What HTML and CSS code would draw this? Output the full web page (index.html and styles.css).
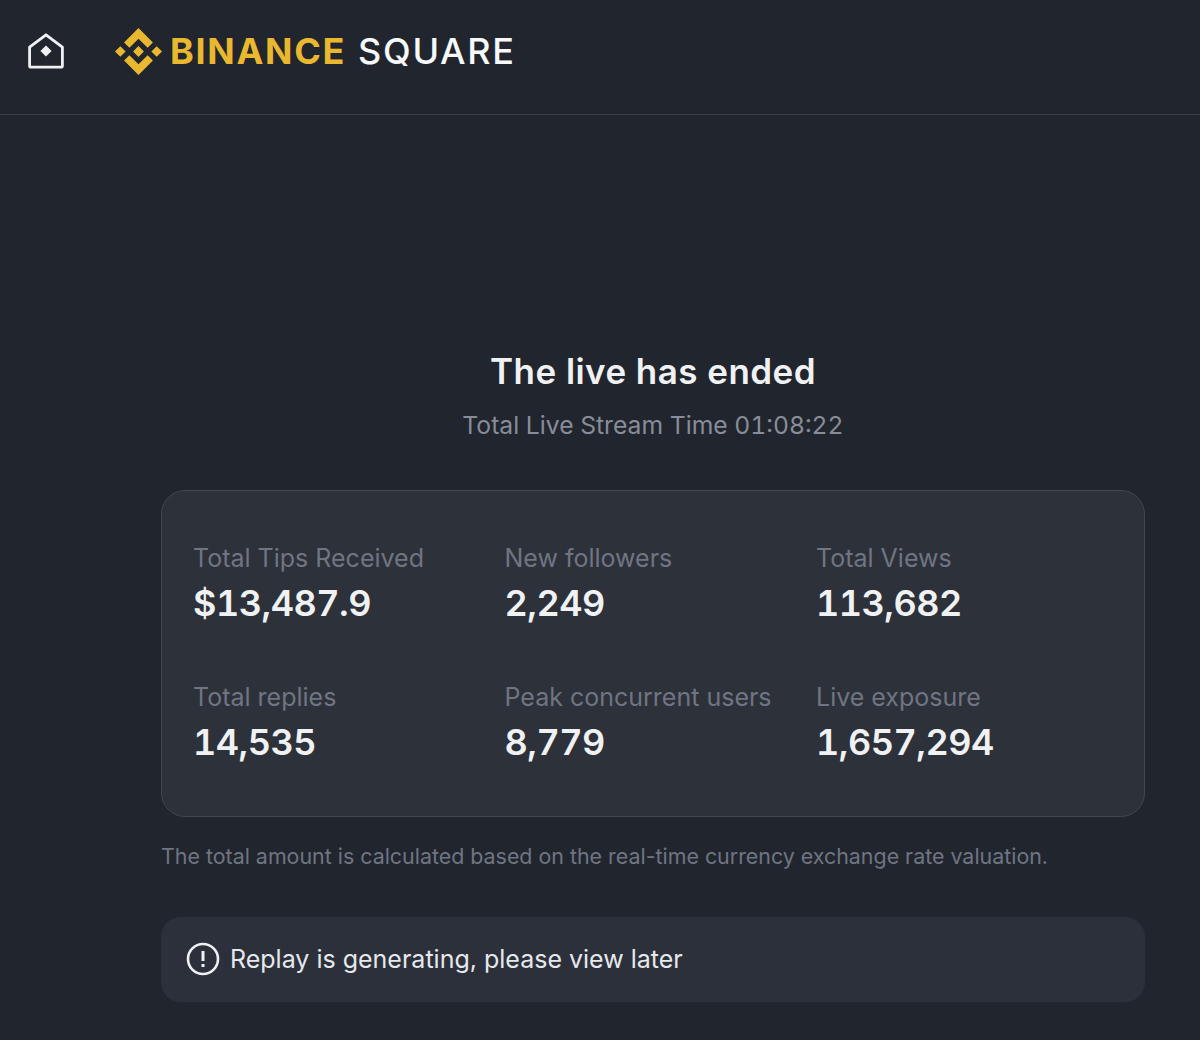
FILE: index.html
```html
<!DOCTYPE html>
<html lang="en">
<head>
    <meta charset="UTF-8">
    <meta name="viewport" content="width=device-width, initial-scale=1.0">
    <title>Binance Square</title>
    <link rel="stylesheet" href="styles.css">
</head>
<body>
    <header class="topbar">
        <svg class="homeicon" viewBox="0 0 36 36" fill="none">
            <path d="M1.600 14.200 18 1.800l16.400 12.400v18.500a1.500 1.500 0 0 1-1.500 1.500H3.100a1.500 1.500 0 0 1-1.500-1.500z" stroke="#f0f1f3" stroke-width="2.800" stroke-linejoin="round"/>
            <path d="M18 12.400l5.600 5.600-5.600 5.600-5.600-5.600z" fill="#f0f1f3"/>
        </svg>
        <div class="brand">
            <svg class="brandicon" viewBox="0 0 126.61 126.61">
                <path d="M38.730 53.200 63.300 28.630l24.590 24.580 14.300-14.300L63.300 0 24.430 38.900zM0 63.310l14.300-14.300 14.300 14.300-14.300 14.300zM38.730 73.410 63.300 97.980l24.590-24.580 14.310 14.290L63.300 126.610 24.430 87.730zM97.990 63.310l14.300-14.300 14.320 14.300-14.310 14.300zM77.830 63.300 63.300 48.780 48.790 63.290l14.510 14.520z" fill="#e9b82f"/>
            </svg>
            <span class="brandname">BINANCE</span>
            <span class="brandsub">SQUARE</span>
        </div>
    </header>
    <main class="content">
        <h1 class="title">The live has ended</h1>
        <p class="duration">Total Live Stream Time 01:08:22</p>
        <section class="statscard">
            <div class="stat">
                <div class="statlabel">Total Tips Received</div>
                <div class="statvalue">$13,487.9</div>
            </div>
            <div class="stat">
                <div class="statlabel">New followers</div>
                <div class="statvalue">2,249</div>
            </div>
            <div class="stat">
                <div class="statlabel">Total Views</div>
                <div class="statvalue">113,682</div>
            </div>
            <div class="stat">
                <div class="statlabel">Total replies</div>
                <div class="statvalue">14,535</div>
            </div>
            <div class="stat">
                <div class="statlabel">Peak concurrent users</div>
                <div class="statvalue">8,779</div>
            </div>
            <div class="stat">
                <div class="statlabel">Live exposure</div>
                <div class="statvalue">1,657,294</div>
            </div>
        </section>
        <p class="note">The total amount is calculated based on the real-time currency exchange rate valuation.</p>
        <div class="replay">
            <svg class="replayicon" viewBox="0 0 34 34" fill="none">
                <circle cx="17" cy="17" r="15" stroke="#eef0f3" stroke-width="2.600"/>
                <path d="M17 9v10" stroke="#eef0f3" stroke-width="3"/>
                <path d="M17 22v3" stroke="#eef0f3" stroke-width="3"/>
            </svg>
            <span>Replay is generating, please view later</span>
        </div>
    </main>
</body>
</html>
```

FILE: styles.css
```css
* {
    margin: 0;
    padding: 0;
    box-sizing: border-box;
}
body {
    background-color: #21252e;
    font-family: "Inter", "Lato", sans-serif;
    color: #eef0f3;
    height: 1040px;
    overflow: hidden;
}
.topbar {
    display: flex;
    align-items: center;
    height: 115px;
    padding: 0 0 12px 28px;
    border-bottom: 1px solid #3a3e47;
}
.homeicon {
    width: 36px;
    height: 36px;
}
.brand {
    display: flex;
    align-items: center;
    margin-left: 51px;
    font-size: 36px;
    line-height: 46px;
}
.brandicon {
    width: 47px;
    height: 47px;
    margin-right: 8px;
}
.brandname {
    color: #e9b82f;
    font-weight: 700;
    letter-spacing: 1.700px;
    margin-right: 12px;
}
.brandsub {
    color: #f7f8f9;
    font-weight: 500;
    letter-spacing: 1.700px;
}
.content {
    margin: 0 55px 0 161px;
    padding-top: 234px;
}
.title {
    text-align: center;
    font-size: 35px;
    line-height: 44px;
    font-weight: 600;
    letter-spacing: 0.450px;
    color: #f0f1f3;
}
.duration {
    text-align: center;
    margin-top: 16px;
    font-size: 24.700px;
    line-height: 32px;
    font-variant-numeric: tabular-nums;
    color: #878d98;
}
.statscard {
    display: grid;
    grid-template-columns: repeat(3, 311.500px);
    grid-auto-rows: 85px;
    row-gap: 53.500px;
    margin-top: 49px;
    height: 327px;
    padding: 51px 31px 0;
    background-color: #2d313a;
    border: 1px solid #42464f;
    border-radius: 24px;
}
.statlabel {
    font-size: 25px;
    line-height: 32px;
    color: #6f7582;
    white-space: nowrap;
}
.statvalue {
    margin-top: 6px;
    font-size: 36px;
    line-height: 46px;
    font-weight: 600;
    font-variant-numeric: tabular-nums;
    letter-spacing: -0.500px;
    color: #f0f1f3;
}
.note {
    margin-top: 25px;
    font-size: 21.400px;
    line-height: 28px;
    color: #6f7582;
    white-space: nowrap;
}
.replay {
    display: flex;
    align-items: center;
    gap: 10px;
    margin-top: 47px;
    height: 85px;
    padding: 0 0 1px 25px;
    background-color: #2b303b;
    border-radius: 20px;
    font-size: 25px;
    color: #e6e8ec;
}
.replayicon {
    width: 34px;
    height: 34px;
}
```
